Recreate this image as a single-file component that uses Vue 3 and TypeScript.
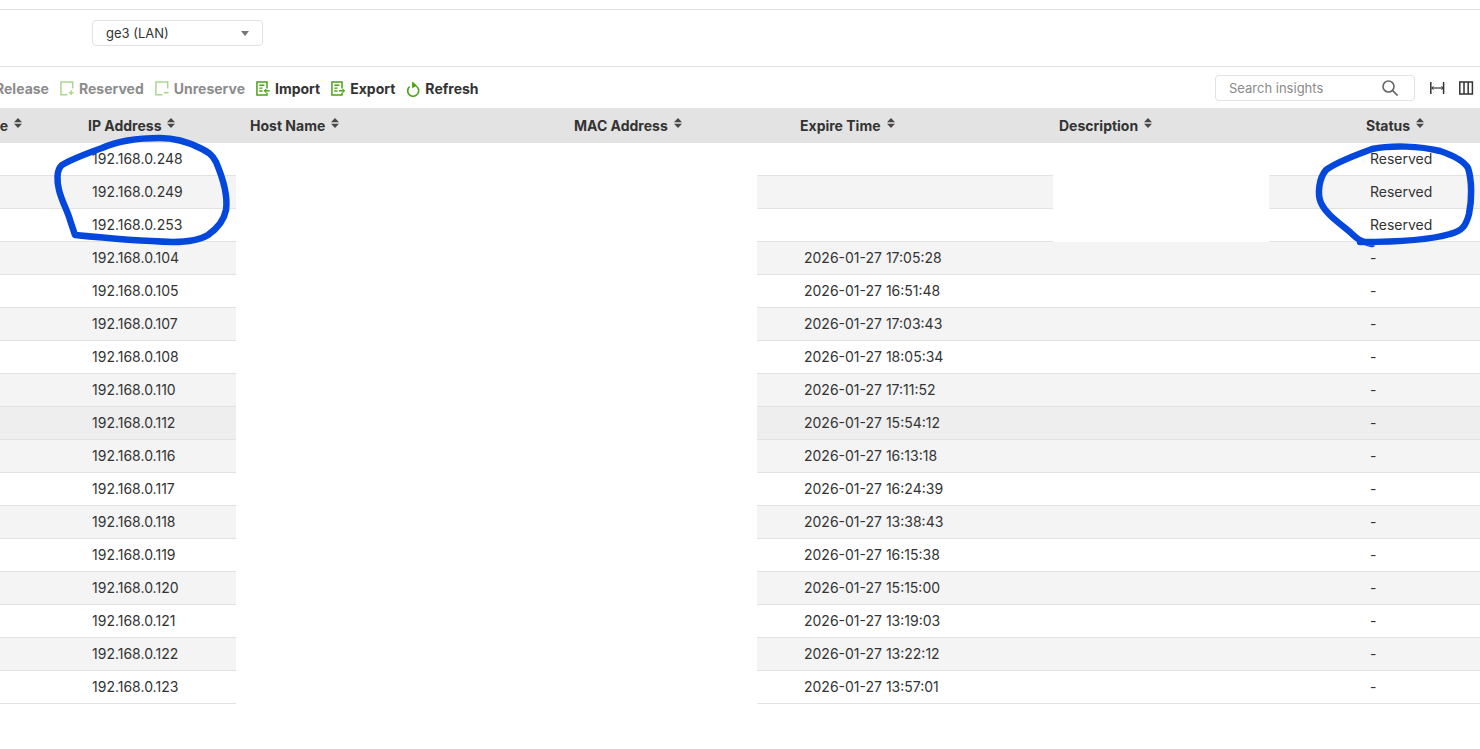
<script setup lang="ts">
interface Lease { ip: string; expire: string; status: string; hover?: boolean }

const leases: Lease[] = [
  { ip: '192.168.0.248', expire: '', status: 'Reserved' },
  { ip: '192.168.0.249', expire: '', status: 'Reserved' },
  { ip: '192.168.0.253', expire: '', status: 'Reserved' },
  { ip: '192.168.0.104', expire: '2026-01-27 17:05:28', status: '-' },
  { ip: '192.168.0.105', expire: '2026-01-27 16:51:48', status: '-' },
  { ip: '192.168.0.107', expire: '2026-01-27 17:03:43', status: '-' },
  { ip: '192.168.0.108', expire: '2026-01-27 18:05:34', status: '-' },
  { ip: '192.168.0.110', expire: '2026-01-27 17:11:52', status: '-' },
  { ip: '192.168.0.112', expire: '2026-01-27 15:54:12', status: '-', hover: true },
  { ip: '192.168.0.116', expire: '2026-01-27 16:13:18', status: '-' },
  { ip: '192.168.0.117', expire: '2026-01-27 16:24:39', status: '-' },
  { ip: '192.168.0.118', expire: '2026-01-27 13:38:43', status: '-' },
  { ip: '192.168.0.119', expire: '2026-01-27 16:15:38', status: '-' },
  { ip: '192.168.0.120', expire: '2026-01-27 15:15:00', status: '-' },
  { ip: '192.168.0.121', expire: '2026-01-27 13:19:03', status: '-' },
  { ip: '192.168.0.122', expire: '2026-01-27 13:22:12', status: '-' },
  { ip: '192.168.0.123', expire: '2026-01-27 13:57:01', status: '-' },
]

const headers: string[] = ['Type', 'IP Address', 'Host Name', 'MAC Address', 'Expire Time', 'Description', 'Status']
</script>

<template>
  <div class="page">
    <div class="top-rule"></div>
    <div class="filter">
      <div class="select">
        <span>ge3 (LAN)</span>
        <i class="caret"></i>
      </div>
    </div>
    <div class="toolbar">
      <div class="actions">
        <span class="action off">
          <svg class="ico" viewBox="0 0 14 16"><path d="M1 1h12v14H1z" fill="none" stroke="#a8d78e" stroke-width="1.6"/></svg>Release
        </span>
        <span class="action off">
          <svg class="ico" viewBox="0 0 15 16" fill="none" stroke="#a8d78e" stroke-width="1.6"><path d="M8 14.6H1V1h12.6v7"/><path d="M9.5 12.5h5M12 10v5"/></svg>Reserved
        </span>
        <span class="action off">
          <svg class="ico" viewBox="0 0 15 16" fill="none" stroke="#a8d78e" stroke-width="1.6"><path d="M8 14.6H1V1h12.6v7"/><path d="M9.5 12.5h5"/></svg>Unreserve
        </span>
        <span class="action">
          <svg class="ico" viewBox="0 0 15 16" fill="none" stroke="#4aa312" stroke-width="1.6"><path d="M11.8 8V1H1v14h10.8v-2.5"/><path d="M3.5 4.6h5.5M3.5 7.6h3.5M3.5 10.6h3.5"/><path d="M14.6 10.5H9.5"/><path d="M11 8.6l-2 1.9 2 1.9" stroke-width="1.2"/></svg>Import
        </span>
        <span class="action">
          <svg class="ico" viewBox="0 0 15 16" fill="none" stroke="#4aa312" stroke-width="1.6"><path d="M11.8 8V1H1v14h10.8v-2.5"/><path d="M3.5 4.6h5.5M3.5 7.6h3.5M3.5 10.6h3.5"/><path d="M8.5 10.5h5"/><path d="M12.4 8.6l2 1.9-2 1.9" stroke-width="1.2"/></svg>Export
        </span>
        <span class="action refresh">
          <svg class="ico-r" viewBox="0 0 13 16" fill="none" stroke="#4aa312" stroke-width="1.6"><path d="M8.8 4.9A5.5 5.5 0 1 1 2.6 5.6"/><path d="M5.6 1.2L9.2 4.4 5.6 6.6z" fill="#4aa312" stroke-width="1"/></svg>Refresh
        </span>
      </div>
      <div class="tools">
        <div class="search">
          <span class="placeholder">Search insights</span>
          <svg class="lens" viewBox="0 0 16 16" fill="none" stroke="#666" stroke-width="1.6"><circle cx="6.5" cy="6.5" r="5.5"/><path d="M10.4 10.4L15.6 15.6"/></svg>
        </div>
        <svg class="tool-ico" viewBox="0 0 15 14" fill="none" stroke="#333" stroke-width="1.5"><path d="M0.8 1v12M13.6 1v12"/><path d="M1.5 7h12" stroke-width="1.2"/><path d="M3.5 5.2L1.8 7l1.7 1.8M11.5 5.2L13.2 7l-1.7 1.8" stroke-width="1"/></svg>
        <svg class="tool-ico" viewBox="0 0 15 14" fill="none" stroke="#333" stroke-width="1.5"><path d="M0.8 1h12.6v12H0.8zM5 1v12M9.2 1v12"/></svg>
      </div>
    </div>

    <div class="table">
      <div class="row head">
        <div v-for="h in headers" :key="h" class="th">
          {{ h }}
          <svg class="sort" viewBox="0 0 8 10" fill="#484848"><path d="M4 0l4 4.2H0zM4 10L0 5.8h8z"/></svg>
        </div>
      </div>
      <div
        v-for="(l, i) in leases"
        :key="l.ip"
        class="row body"
        :class="{ odd: i % 2 === 1, hover: l.hover }"
      >
        <div class="td"></div>
        <div class="td">{{ l.ip }}</div>
        <div class="td"></div>
        <div class="td"></div>
        <div class="td">{{ l.expire }}</div>
        <div class="td"></div>
        <div class="td">{{ l.status }}</div>
      </div>
      <div class="mask mask-wide"></div>
      <div class="mask mask-desc"></div>
    </div>

    <svg class="marker" viewBox="0 0 1480 749" fill="none" stroke="#0347dc" stroke-width="6.5" stroke-linecap="round" stroke-linejoin="round">
      <path d="M75 235C105 238 140 241 173 242C190 242 200 240 208 235C218 228 224 220 226 210C228 196 222 176 216 162C212 154 208 152 200 148C188 142 176 138 160 138C140 138 120 140 102 148C88 153 72 159 62 165C56 170 57 182 59 190C62 202 68 212 70 220Z"/>
      <path d="M1372 244C1362 242 1358 240 1350 232C1338 222 1326 214 1321 203C1317 194 1319 178 1326 170C1336 162 1356 155 1372 149C1392 145 1420 146 1440 151C1452 155 1464 161 1468 168C1472 180 1472 200 1469 214C1466 226 1462 231 1450 234C1430 240 1400 242 1360 242"/>
    </svg>
  </div>
</template>

<style scoped>
.page {
  position: relative;
  width: 1480px;
  height: 749px;
  overflow: hidden;
  background: #fff;
  font-family: Inter, "Noto Sans", sans-serif;
  font-size: 14px;
  color: #333;
}
.top-rule {
  height: 1px;
  margin-top: 9px;
  background: #e2e2e2;
}
.filter {
  height: 57px;
  box-sizing: border-box;
  padding: 10px 0 0 92px;
  border-bottom: 1px solid #e2e2e2;
}
.select {
  width: 171px;
  height: 26px;
  box-sizing: border-box;
  padding: 0 13px 0 13px;
  display: flex;
  align-items: center;
  justify-content: space-between;
  border: 1px solid #e2e2e2;
  border-radius: 4px;
  font-size: 13px;
}
.caret {
  width: 0;
  height: 0;
  border-left: 4.5px solid transparent;
  border-right: 4.5px solid transparent;
  border-top: 5px solid #777;
}
.toolbar {
  height: 41px;
  display: flex;
  align-items: center;
  justify-content: space-between;
  padding-right: 6px;
}
.actions {
  display: flex;
  align-items: center;
  gap: 11px;
  margin: 2px 0 0 -24px;
  font-weight: 700;
}
.action {
  display: flex;
  align-items: center;
  gap: 5px;
  white-space: nowrap;
}
.action.off {
  color: #8c8c8c;
}
.refresh {
  margin-left: 1px;
}
.ico {
  width: 14px;
  height: 15px;
  flex: none;
}
.ico-r {
  width: 13px;
  height: 16px;
  flex: none;
}
.tools {
  display: flex;
  align-items: center;
}
.search {
  width: 200px;
  height: 26px;
  box-sizing: border-box;
  padding: 0 16px 0 13px;
  display: flex;
  align-items: center;
  justify-content: space-between;
  border: 1px solid #e2e2e2;
  border-radius: 4px;
  font-size: 13px;
  margin-right: 15px;
}
.placeholder {
  color: #8a8a8a;
}
.lens {
  width: 16px;
  height: 16px;
}
.tool-ico {
  width: 15px;
  height: 14px;
  margin-right: 14px;
}
.tool-ico:last-child {
  margin-right: 0;
}
.table {
  position: relative;
  margin-left: -40px;
}
.row {
  display: grid;
  grid-template-columns: 114px 162px 324px 226px 259px 307px 128px;
}
.head {
  height: 35px;
  background: #e3e3e3;
  font-weight: 700;
}
.th {
  padding: 0 0 0 14px;
  display: flex;
  align-items: center;
  gap: 6px;
  white-space: nowrap;
}
.sort {
  width: 8px;
  height: 10px;
  margin-top: -6px;
}
.body {
  height: 33px;
  box-sizing: border-box;
  border-bottom: 1px solid #e2e2e2;
  line-height: 32px;
}
.odd {
  background: #f4f4f4;
}
.hover {
  background: #eeeeee;
}
.td {
  padding-left: 18px;
  white-space: nowrap;
}
.mask {
  position: absolute;
  background: #fff;
}
.mask-wide {
  left: 276px;
  top: 35px;
  width: 521px;
  height: 562px;
}
.mask-desc {
  left: 1093px;
  top: 35px;
  width: 216px;
  height: 99px;
}
.marker {
  position: absolute;
  left: 0;
  top: 0;
  width: 1480px;
  height: 749px;
  pointer-events: none;
}
</style>
